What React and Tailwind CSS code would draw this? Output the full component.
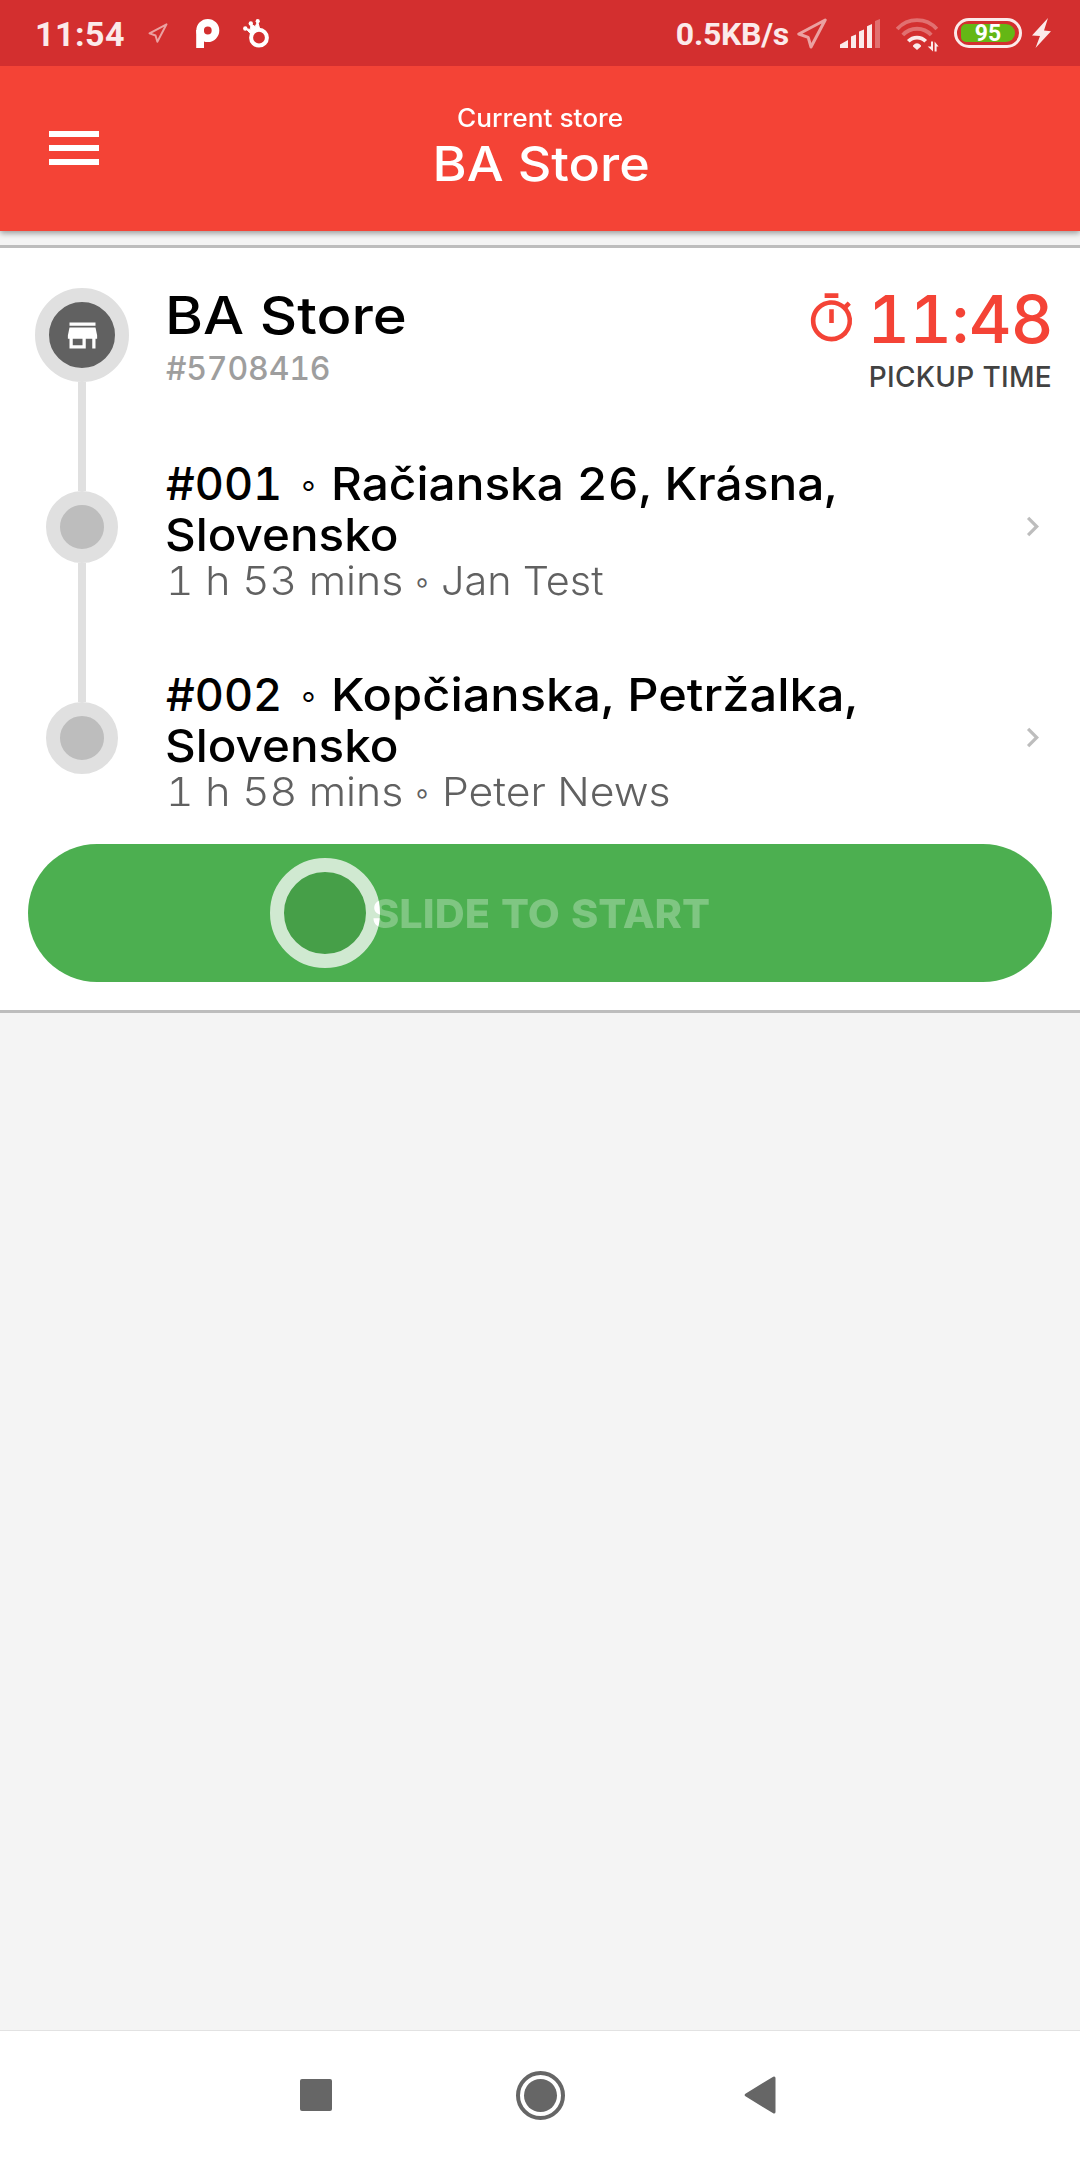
import React from "react";

function LocationArrow({ className, strokeWidth }) {
  return (
    <svg viewBox="0 0 30 31" className={className} fill="none" stroke="white" strokeOpacity="0.55" strokeWidth={strokeWidth} strokeLinejoin="round">
      <path d="M28.2 2 1.8 16l9.4 3.4L14 29z" />
    </svg>
  );
}

function StatusBar() {
  return (
    <div className="relative z-20 flex h-[66px] items-center bg-[#d32f2f] pl-[35px] pr-[29px] font-[Roboto,sans-serif] font-bold text-[#fbeaea]">
      <span className="w-[92px] text-[34px] leading-[66px] tracking-[0.48px] whitespace-nowrap pt-[2px]">11:54</span>
      <LocationArrow className="ml-[21px] h-[20px] w-[20px]" strokeWidth="3" />
      <svg viewBox="0 0 24 29" className="ml-[28px] h-[29px] w-[24px]" fill="none">
        <circle cx="11.8" cy="11.5" r="7.7" stroke="white" strokeWidth="7.6" />
        <path d="M0.2 11H8v18H0.2z" fill="white" />
      </svg>
      <svg viewBox="0 0 26 29" className="ml-[23px] h-[29px] w-[26px]" fill="none">
        <circle cx="16" cy="18.7" r="7.9" stroke="white" strokeWidth="4" />
        <path d="M3 9.8l4.6.6L7.8 5l4.4 2.6 2.5-5 1.8 6.6-8.5 6z" fill="white" stroke="white" strokeWidth="1" strokeLinejoin="round" />
        <circle cx="2.3" cy="9.5" r="2.2" fill="white" />
        <circle cx="7.8" cy="4.5" r="2.2" fill="white" />
        <circle cx="14.7" cy="2.2" r="2.1" fill="white" />
      </svg>
      <span className="ml-auto text-[32px] leading-[66px] tracking-[-0.27px] whitespace-nowrap pt-[2px]">0.5KB/s</span>
      <LocationArrow className="ml-[8px] h-[31px] w-[30px]" strokeWidth="3" />
      <svg viewBox="0 0 40 29" className="ml-[13px] h-[29px] w-[40px]" fill="#fbeaea">
        <path d="M0 25.5 8 21v8H0z" />
        <path d="M11 17.5l5-2V29h-5z" />
        <path d="M19 12.5l5-2V29h-5z" />
        <path d="M27 7.2l5-2.2v24h-5z" />
        <path d="M35 2l5-2v29h-5z" fillOpacity="0.35" />
      </svg>
      <svg viewBox="0 0 43 34" className="ml-[16px] mt-[3px] h-[34px] w-[43px]" fill="none" stroke="#fbeaea" strokeWidth="3.8">
        <path d="M1.2 11a26.6 26.6 0 0 1 39.6 0" strokeOpacity="0.35" />
        <path d="M6.8 17a19.3 19.3 0 0 1 28.4 0" strokeOpacity="0.35" />
        <path d="M12.3 23.3a12 12 0 0 1 17.4 0" />
        <path d="M17 27.5q4-4.5 8 0v1L21 32l-4-3.5z" fill="#fbeaea" stroke="none" />
        <path d="M37 23.5v10l-5.3-5H35v-5zM38.6 33.5v-10l4 5h-2v5z" fill="#fbeaea" stroke="none" />
      </svg>
      <div className="ml-[15px] flex h-[30px] w-[68px] items-center justify-center rounded-full border-[3px] border-[#fbeaea]">
        <div className="flex h-[18px] w-[54px] items-center justify-center rounded-l-[5px] rounded-r-[9px] bg-[#64b715] text-[23px] leading-[18px] text-white">
          <span className="pt-px">95</span>
        </div>
      </div>
      <svg viewBox="0 0 19 30" className="ml-[10px] h-[30px] w-[19px]" fill="#fbeaea">
        <path d="M16 0 0 17.5 8 18 3.5 30 19 13.2 12 12.6z" />
      </svg>
    </div>
  );
}

function AppBar() {
  return (
    <header className="relative z-10 flex h-[165px] bg-[#f44336] text-white shadow-[0_2px_6px_rgba(0,0,0,0.4)]">
      <div className="w-[180px] pt-[65px] pl-[49px]">
        <div className="flex w-[50px] flex-col gap-[8px]">
          <div className="h-[6px] bg-white" />
          <div className="h-[6px] bg-white" />
          <div className="h-[6px] bg-white" />
        </div>
      </div>
      <div className="flex flex-1 flex-col items-center pt-[36px] font-medium whitespace-nowrap">
        <div className="scale-x-[1.05] text-[25px] leading-[32px]">Current store</div>
        <div className="mt-px pl-[2px] scale-x-[1.085] text-[48px] leading-[58px]">BA Store</div>
      </div>
      <div className="w-[180px]" />
    </header>
  );
}

function StoreRow() {
  return (
    <div className="flex h-[173px]">
      <div className="flex w-[166px] flex-col pt-[40px]">
        <div className="ml-[35px] flex h-[94px] w-[94px] shrink-0 items-center justify-center rounded-full border-[14px] border-[#e0e0e0] bg-[#616161]">
          <svg viewBox="0 0 24 24" className="h-[39px] w-[39px] shrink-0" fill="white">
            <path d="M20 4H4v2h16V4zm1 10v-2l-1-5H4l-1 5v2h1v6h10v-6h4v6h2v-6h1v0zm-9 4H6v-4h6v4z" />
          </svg>
        </div>
        <div className="ml-[78px] w-[8px] flex-1 bg-[#e0e0e0]" />
      </div>
      <div className="flex-1 pt-[37px] font-medium whitespace-nowrap">
        <div className="-ml-px origin-left scale-x-[1.115] text-[52px] leading-[62px] text-black">BA Store</div>
        <div className="mt-[3px] text-[32px] leading-[38px] tracking-[-0.15px] text-[#9e9e9e]">#5708416</div>
      </div>
      <div className="flex flex-col items-end pt-[35px] pr-[28px] font-medium whitespace-nowrap">
        <div className="flex text-[#f44336]">
          <svg viewBox="0 0 24 24" className="mt-[8px] mr-[8px] h-[55px] w-[55px]" fill="currentColor">
            <path d="M9 1h6v2H9zM11 8h2v6h-2zM19.03 7.39l1.42-1.42c-.43-.51-.9-.99-1.41-1.41l-1.42 1.42C16.07 4.74 14.12 4 12 4c-4.97 0-9 4.03-9 9s4.02 9 9 9a8.994 8.994 0 0 0 7.03-14.61zM12 20c-3.87 0-7-3.13-7-7s3.13-7 7-7 7 3.13 7 7-3.13 7-7 7z" />
          </svg>
          <span className="-mr-px text-[66px] leading-[72px] tracking-[-0.6px]">11:48</span>
        </div>
        <div className="mt-[5px] text-[28px] leading-[34px] tracking-[0.3px] text-[#424242]">PICKUP TIME</div>
      </div>
    </div>
  );
}

function StopRow({ number, street, country, eta, customer, last }) {
  return (
    <div className={last ? "flex h-[212px]" : "flex h-[211px]"}>
      <div className="flex w-[166px] flex-col">
        <div className="ml-[78px] h-[70px] w-[8px] bg-[#e0e0e0]" />
        <div className="ml-[46px] h-[72px] w-[72px] shrink-0 rounded-full border-[14px] border-[#e0e0e0] bg-[#bdbdbd]" />
        {!last && <div className="ml-[78px] w-[8px] flex-1 bg-[#e0e0e0]" />}
      </div>
      <div className="flex-1 pt-[37px] whitespace-nowrap">
        <div className="text-[45px] leading-[51px] font-medium text-black">
          <div className="flex">
            <span className="w-[132px]">{number}</span>
            <span className="flex w-[21px] justify-center text-[38px] font-light">◦</span>
            <span className={last ? "ml-[12px] origin-left scale-x-[1.084]" : "ml-[12px] origin-left scale-x-[1.062]"}>{street}</span>
          </div>
          <div className="-ml-px w-[221px] origin-left scale-x-[1.057]">{country}</div>
        </div>
        <div className="flex text-[40px] leading-[42px] font-light text-[#616161]">
          <span className="w-[246px]">
            <span className="inline-block origin-left scale-x-[1.07]">{eta}</span>
          </span>
          <span className="flex w-[20px] justify-center text-[34px]">◦</span>
          <span className={last ? "ml-[10px] origin-left scale-x-[1.068]" : "ml-[9px] origin-left scale-x-[1.035]"}>{customer}</span>
        </div>
      </div>
      <svg viewBox="0 0 24 24" className="mt-[86px] mr-[28px] h-[39px] w-[39px]" fill="#bdbdbd">
        <path d="M10 6 8.59 7.41 13.17 12l-4.58 4.59L10 18l6-6z" />
      </svg>
    </div>
  );
}

function SlideToStart() {
  return (
    <div className="relative isolate mr-[28px] ml-[28px] h-[138px] rounded-full bg-[#4caf50]">
      <div className="absolute top-[14px] left-[242px] h-[110px] w-[110px] rounded-full border-[14px] border-[#d0e9d1] bg-[#469f48]" />
      {/* Additive label: pale green over the track, pure white over the knob's ring */}
      <div className="relative flex justify-center pt-px pl-[2px] text-[40px] leading-[138px] font-extrabold whitespace-nowrap text-[#331732] mix-blend-plus-lighter">
        <span className="scale-x-[1.037]">SLIDE TO START</span>
      </div>
    </div>
  );
}

function NavigationBar() {
  return (
    <nav className="flex h-[130px] items-center justify-between border-t border-[#e2e2e2] bg-white pr-[304px] pb-px pl-[300px]">
      <div className="h-[32px] w-[32px] rounded-[2px] bg-[#666]" />
      <div className="ml-[5px] flex h-[49px] w-[49px] items-center justify-center rounded-full border-[4px] border-[#666]">
        <div className="h-[33px] w-[33px] rounded-full bg-[#666]" />
      </div>
      <svg viewBox="0 0 32 38" className="h-[38px] w-[32px]" fill="#666" stroke="#666" strokeWidth="3" strokeLinejoin="round">
        <path d="M30 2v34L2.2 19z" />
      </svg>
    </nav>
  );
}

export default function App() {
  return (
    <div className="flex h-[2160px] w-[1080px] flex-col overflow-hidden bg-[#f4f4f4] font-[Inter,sans-serif] tabular-nums">
      <StatusBar />
      <AppBar />
      <main className="flex-1 pt-[14px]">
        <section className="border-y-[3px] border-[#bdbdbd] bg-white pb-[28px]">
          <StoreRow />
          <StopRow number="#001" street="Račianska 26, Krásna," country="Slovensko" eta="1 h 53 mins" customer="Jan Test" />
          <StopRow last number="#002" street="Kopčianska, Petržalka," country="Slovensko" eta="1 h 58 mins" customer="Peter News" />
          <SlideToStart />
        </section>
      </main>
      <NavigationBar />
    </div>
  );
}
